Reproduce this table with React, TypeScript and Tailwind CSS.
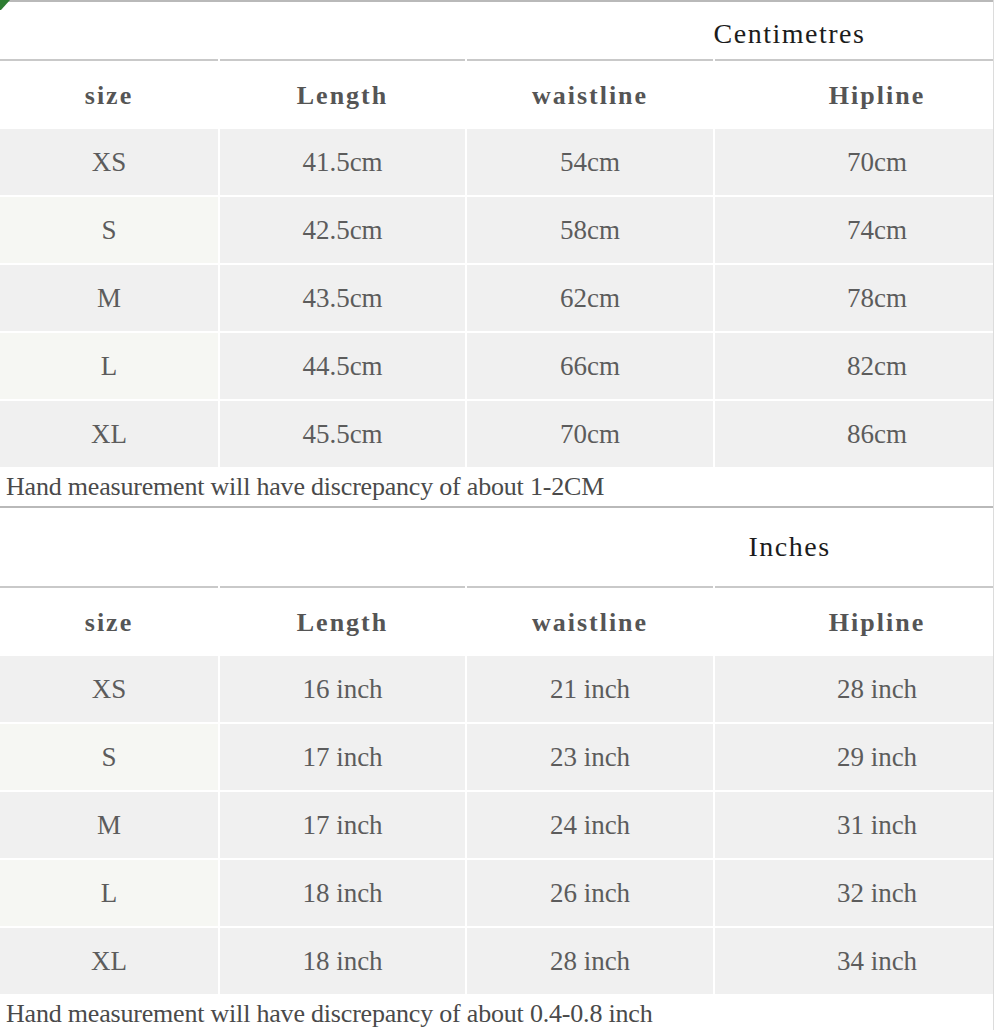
import React from 'react';

type Row = { size: string; length: string; waist: string; hip: string };

const cmRows: Row[] = [
	{ size: 'XS', length: '41.5cm', waist: '54cm', hip: '70cm' },
	{ size: 'S', length: '42.5cm', waist: '58cm', hip: '74cm' },
	{ size: 'M', length: '43.5cm', waist: '62cm', hip: '78cm' },
	{ size: 'L', length: '44.5cm', waist: '66cm', hip: '82cm' },
	{ size: 'XL', length: '45.5cm', waist: '70cm', hip: '86cm' },
];

const inchRows: Row[] = [
	{ size: 'XS', length: '16 inch', waist: '21 inch', hip: '28 inch' },
	{ size: 'S', length: '17 inch', waist: '23 inch', hip: '29 inch' },
	{ size: 'M', length: '17 inch', waist: '24 inch', hip: '31 inch' },
	{ size: 'L', length: '18 inch', waist: '26 inch', hip: '32 inch' },
	{ size: 'XL', length: '18 inch', waist: '28 inch', hip: '34 inch' },
];

const headers = ['size', 'Length', 'waistline', 'Hipline'];

// Shared column template: 218 / 245 / 246 / rest, with 2px white gutters
const cols = 'grid grid-cols-[218px_245px_246px_1fr] gap-x-[2px]';
const cell = 'flex items-center justify-center';

function SizeTable({ title, titleClass, rows, note }: { title: string; titleClass: string; rows: Row[]; note: string }) {
	return (
		<section className="border-t-2 border-[#b9b9b9]">
			{/* Unit title */}
			<div className={`flex justify-center pl-[586px] ${titleClass}`}>
				<span className="text-[28px] tracking-[1.5px] text-[#1c1c1c] leading-[32px]">{title}</span>
			</div>

			{/* Header row */}
			<div className={cols}>
				{headers.map((h, i) => (
					<div key={h} className={`${cell} border-t-2 border-[#c9c9c9] h-[70px] ${i === 3 ? 'pl-[46px]' : ''}`}>
						<span className="text-[26px] font-bold tracking-[2px] text-[#555555]">{h}</span>
					</div>
				))}
			</div>

			{/* Data rows */}
			<div className="flex flex-col gap-y-[2px] text-[27px]">
				{rows.map((r, i) => (
					<div key={r.size} className={`${cols} h-[66px]`}>
						<div className={`${cell} ${i % 2 === 1 ? 'bg-[#f6f7f3]' : 'bg-[#f0f0f0]'}`}>{r.size}</div>
						<div className={`${cell} bg-[#f0f0f0]`}>{r.length}</div>
						<div className={`${cell} bg-[#f0f0f0]`}>{r.waist}</div>
						<div className={`${cell} bg-[#f0f0f0] pl-[46px]`}>{r.hip}</div>
					</div>
				))}
			</div>

			{/* Footnote */}
			<div className="h-[39px] flex items-center pl-[6px] text-[#4a4a4a] tracking-[-0.2px]">{note}</div>
		</section>
	);
}

export default function App() {
	return (
		<div className="relative w-[994px] bg-white border-r border-[#dcdcdc] text-[26px] text-[#5c5c5c] font-['Liberation_Serif','Times_New_Roman',serif]">
			{/* green corner mark */}
			<svg className="absolute top-0 left-0" width="11" height="11" viewBox="0 0 11 11">
				<polygon points="0,0 10,0 1,10 0,10" fill="#2e7d32" />
			</svg>

			<SizeTable
				title="Centimetres"
				titleClass="h-[57px] pt-[16px]"
				rows={cmRows}
				note="Hand measurement will have discrepancy of about 1-2CM"
			/>
			<SizeTable
				title="Inches"
				titleClass="h-[78px] items-center"
				rows={inchRows}
				note="Hand measurement will have discrepancy of about 0.4-0.8 inch"
			/>
		</div>
	);
}
